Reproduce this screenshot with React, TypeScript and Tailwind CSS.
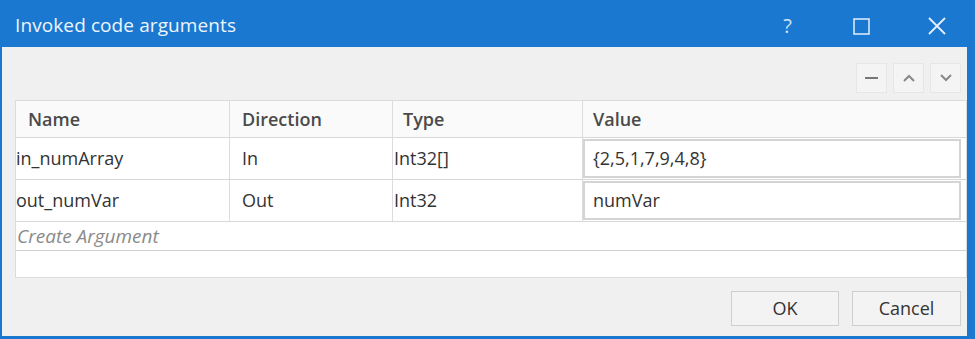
import React from "react";

const rows = [
  { name: "in_numArray", dir: "In", type: "Int32[]", value: "{2,5,1,7,9,4,8}" },
  { name: "out_numVar", dir: "Out", type: "Int32", value: "numVar" },
];

function ToolButton({ children }: { children: React.ReactNode }) {
  return (
    <div className="w-[31px] h-[30px] flex items-center justify-center bg-[#f4f4f4] border border-[#e6e6e6] text-[#7a7a7a]">
      {children}
    </div>
  );
}

export default function App() {
  return (
    <div
      className="w-[975px] h-[339px] bg-[#1b78d0] flex flex-col overflow-hidden"
      style={{ fontFamily: '"Open Sans", "Noto Sans", sans-serif' }}
    >
      {/* title bar */}
      <div className="h-[47px] flex items-center pl-[15px] pt-[4px] text-white shrink-0">
        <span className="text-[19px] tracking-[0.1px] text-[#eef5fc]">Invoked code arguments</span>
        <div className="ml-auto flex items-center">
          <span className="w-[75px] text-center text-[20px] text-[#cfe3f7]">?</span>
          <svg width="75" height="20" viewBox="0 0 75 20">
            <rect x="29" y="3" width="15" height="15" fill="none" stroke="#d8e8f8" strokeWidth="1.6" />
          </svg>
          <svg width="75" height="22" viewBox="0 0 75 22">
            <path d="M29 3 L45 19 M45 3 L29 19" stroke="#e6f0fa" strokeWidth="1.8" />
          </svg>
        </div>
      </div>

      {/* body */}
      <div className="flex-1 ml-[2px] mr-[8px] mb-[3px] bg-[#f0f0f0] flex flex-col">
        <div className="flex justify-end gap-[6px] pt-[16px] pr-[6px]">
          <ToolButton>
            <div className="w-[13px] h-[2px] bg-[#777]" />
          </ToolButton>
          <ToolButton>
            <svg width="14" height="10" viewBox="0 0 14 10">
              <path d="M2 8 L7 3 L12 8" fill="none" stroke="#888" strokeWidth="2" />
            </svg>
          </ToolButton>
          <ToolButton>
            <svg width="14" height="10" viewBox="0 0 14 10">
              <path d="M2 2 L7 7 L12 2" fill="none" stroke="#888" strokeWidth="2" />
            </svg>
          </ToolButton>
        </div>

        {/* table */}
        <div className="mt-[7px] ml-[13px] border border-[#dcdcdc] bg-white text-[18px] text-[#333]">
          <div className="grid grid-cols-[214px_163px_190px_1fr] h-[37px] bg-[#fafafa] border-b border-[#d8d8d8] font-semibold text-[#4a4a4a]">
            <div className="pl-[12px] flex items-center border-r border-[#dcdcdc]">Name</div>
            <div className="pl-[12px] flex items-center border-r border-[#dcdcdc]">Direction</div>
            <div className="pl-[10px] flex items-center border-r border-[#dcdcdc]">Type</div>
            <div className="pl-[10px] flex items-center">Value</div>
          </div>
          {rows.map((r) => (
            <div key={r.name} className="grid grid-cols-[214px_163px_190px_1fr] h-[42px] border-b border-[#d8d8d8]">
              <div className="pl-[0px] flex items-center border-r border-[#dcdcdc]">{r.name}</div>
              <div className="pl-[12px] flex items-center border-r border-[#dcdcdc]">{r.dir}</div>
              <div className="pl-[1px] flex items-center border-r border-[#dcdcdc]">{r.type}</div>
              <div className="flex items-stretch py-[1px] pr-[5px]">
                <div className="flex-1 flex items-center pl-[8px] border-2 border-[#d4d4d4] bg-white">{r.value}</div>
              </div>
            </div>
          ))}
          <div className="h-[29px] flex items-center pl-[1px] italic text-[19px] text-[#8a8a8a] border-b border-[#d0d0d0]">
            Create Argument
          </div>
          <div className="h-[26px]" />
        </div>

        {/* buttons */}
        <div className="flex justify-end gap-[13px] mt-[13px] pr-[6px]">
          <button className="w-[108px] h-[35px] border border-[#cfcfcf] bg-[#f3f3f3] text-[18px] text-[#333]">OK</button>
          <button className="w-[109px] h-[35px] border border-[#cfcfcf] bg-[#f3f3f3] text-[18px] text-[#333]">Cancel</button>
        </div>
      </div>
    </div>
  );
}
